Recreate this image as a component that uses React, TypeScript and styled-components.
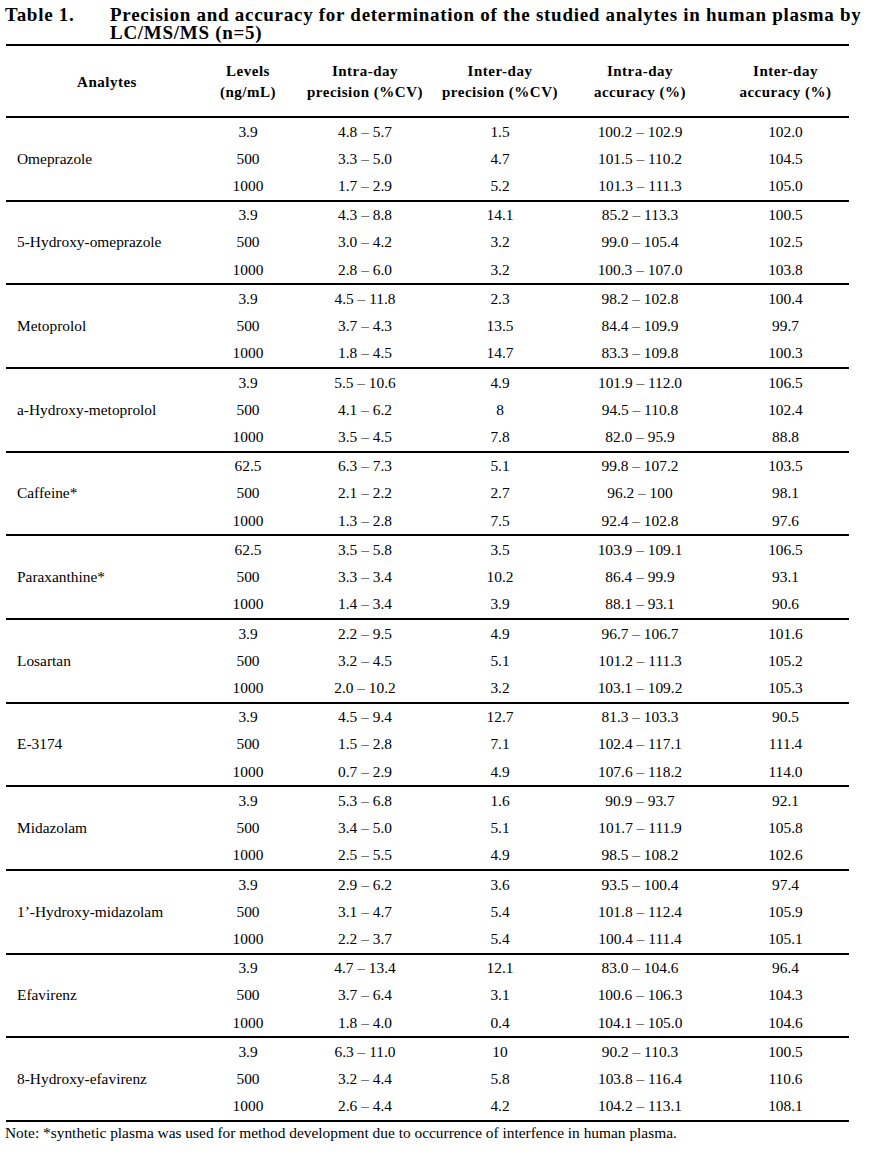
import React from 'react';
import styled, { createGlobalStyle } from 'styled-components';

const GlobalStyle = createGlobalStyle`
  body {
    margin: 0;
    background: #fff;
    color: #000;
    font-family: "Liberation Serif", "Times New Roman", serif;
  }
`

const Page = styled.div`
  width: 870px;
  padding: 6px 8px 0 5px;
  box-sizing: border-box;
`

const Caption = styled.div`
  display: flex;
  font-weight: bold;
  font-size: 19px;
  line-height: 18px;
  letter-spacing: 0.72px;
`

const CaptionLabel = styled.div`
  width: 105px;
  flex-shrink: 0;
`

const CaptionText = styled.div`
  flex: 1;
`

const Table = styled.div`
  width: 843px;
  margin-top: 2px;
  margin-left: 1px;
  border-top: 2px solid #000;
`

const COLUMNS = '202px 80px 154px 116px 164px 127px';

const HeadRow = styled.div`
  display: grid;
  grid-template-columns: ${COLUMNS};
  height: 70px;
  border-bottom: 2px solid #000;
`

const HeadCell = styled.div`
  display: flex;
  align-items: center;
  justify-content: center;
  text-align: center;
  font-weight: bold;
  font-size: 15px;
  line-height: 21px;
  letter-spacing: 0.5px;
  padding-top: 2px;
`

const Group = styled.div`
  display: grid;
  grid-template-columns: ${COLUMNS};
  grid-template-rows: repeat(3, 27.23px);
  border-bottom: 2px solid #000;
  font-size: 15.4px;
`

const Analyte = styled.div`
  grid-column: 1;
  grid-row: 1 / span 3;
  display: flex;
  align-items: center;
  padding-left: 11px;
`

const Value = styled.div`
  display: flex;
  align-items: center;
  justify-content: center;
  white-space: nowrap;
`

const Note = styled.div`
  font-size: 15.4px;
  line-height: 20px;
  padding-top: 1px;
`

type Row = [string, string, string, string, string];

interface Analyte {
  name: string;
  rows: Row[];
}

const analytes: Analyte[] = [
  { name: 'Omeprazole', rows: [
    ['3.9', '4.8 – 5.7', '1.5', '100.2 – 102.9', '102.0'],
    ['500', '3.3 – 5.0', '4.7', '101.5 – 110.2', '104.5'],
    ['1000', '1.7 – 2.9', '5.2', '101.3 – 111.3', '105.0'],
  ] },
  { name: '5-Hydroxy-omeprazole', rows: [
    ['3.9', '4.3 – 8.8', '14.1', '85.2 – 113.3', '100.5'],
    ['500', '3.0 – 4.2', '3.2', '99.0 – 105.4', '102.5'],
    ['1000', '2.8 – 6.0', '3.2', '100.3 – 107.0', '103.8'],
  ] },
  { name: 'Metoprolol', rows: [
    ['3.9', '4.5 – 11.8', '2.3', '98.2 – 102.8', '100.4'],
    ['500', '3.7 – 4.3', '13.5', '84.4 – 109.9', '99.7'],
    ['1000', '1.8 – 4.5', '14.7', '83.3 – 109.8', '100.3'],
  ] },
  { name: 'a-Hydroxy-metoprolol', rows: [
    ['3.9', '5.5 – 10.6', '4.9', '101.9 – 112.0', '106.5'],
    ['500', '4.1 – 6.2', '8', '94.5 – 110.8', '102.4'],
    ['1000', '3.5 – 4.5', '7.8', '82.0 – 95.9', '88.8'],
  ] },
  { name: 'Caffeine*', rows: [
    ['62.5', '6.3 – 7.3', '5.1', '99.8 – 107.2', '103.5'],
    ['500', '2.1 – 2.2', '2.7', '96.2 – 100', '98.1'],
    ['1000', '1.3 – 2.8', '7.5', '92.4 – 102.8', '97.6'],
  ] },
  { name: 'Paraxanthine*', rows: [
    ['62.5', '3.5 – 5.8', '3.5', '103.9 – 109.1', '106.5'],
    ['500', '3.3 – 3.4', '10.2', '86.4 – 99.9', '93.1'],
    ['1000', '1.4 – 3.4', '3.9', '88.1 – 93.1', '90.6'],
  ] },
  { name: 'Losartan', rows: [
    ['3.9', '2.2 – 9.5', '4.9', '96.7 – 106.7', '101.6'],
    ['500', '3.2 – 4.5', '5.1', '101.2 – 111.3', '105.2'],
    ['1000', '2.0 – 10.2', '3.2', '103.1 – 109.2', '105.3'],
  ] },
  { name: 'E-3174', rows: [
    ['3.9', '4.5 – 9.4', '12.7', '81.3 – 103.3', '90.5'],
    ['500', '1.5 – 2.8', '7.1', '102.4 – 117.1', '111.4'],
    ['1000', '0.7 – 2.9', '4.9', '107.6 – 118.2', '114.0'],
  ] },
  { name: 'Midazolam', rows: [
    ['3.9', '5.3 – 6.8', '1.6', '90.9 – 93.7', '92.1'],
    ['500', '3.4 – 5.0', '5.1', '101.7 – 111.9', '105.8'],
    ['1000', '2.5 – 5.5', '4.9', '98.5 – 108.2', '102.6'],
  ] },
  { name: '1’-Hydroxy-midazolam', rows: [
    ['3.9', '2.9 – 6.2', '3.6', '93.5 – 100.4', '97.4'],
    ['500', '3.1 – 4.7', '5.4', '101.8 – 112.4', '105.9'],
    ['1000', '2.2 – 3.7', '5.4', '100.4 – 111.4', '105.1'],
  ] },
  { name: 'Efavirenz', rows: [
    ['3.9', '4.7 – 13.4', '12.1', '83.0 – 104.6', '96.4'],
    ['500', '3.7 – 6.4', '3.1', '100.6 – 106.3', '104.3'],
    ['1000', '1.8 – 4.0', '0.4', '104.1 – 105.0', '104.6'],
  ] },
  { name: '8-Hydroxy-efavirenz', rows: [
    ['3.9', '6.3 – 11.0', '10', '90.2 – 110.3', '100.5'],
    ['500', '3.2 – 4.4', '5.8', '103.8 – 116.4', '110.6'],
    ['1000', '2.6 – 4.4', '4.2', '104.2 – 113.1', '108.1'],
  ] },
];

const headers: [string, string][] = [
  ['Levels', '(ng/mL)'],
  ['Intra-day', 'precision (%CV)'],
  ['Inter-day', 'precision (%CV)'],
  ['Intra-day', 'accuracy (%)'],
  ['Inter-day', 'accuracy (%)'],
];

export default function App() {
  return (
    <Page>
      <GlobalStyle />
      <Caption>
        <CaptionLabel>Table 1.</CaptionLabel>
        <CaptionText>
          Precision and accuracy for determination of the studied analytes in human plasma by LC/MS/MS (n=5)
        </CaptionText>
      </Caption>
      <Table>
        <HeadRow>
          <HeadCell>Analytes</HeadCell>
          {headers.map(([a, b], i) => (
            <HeadCell key={i}>{a}<br />{b}</HeadCell>
          ))}
        </HeadRow>
        {analytes.map(analyte => (
          <Group key={analyte.name}>
            <Analyte>{analyte.name}</Analyte>
            {analyte.rows.map((row, r) =>
              row.map((v, c) => (
                <Value key={`${r}-${c}`} style={{ gridRow: r + 1, gridColumn: c + 2 }}>{v}</Value>
              ))
            )}
          </Group>
        ))}
      </Table>
      <Note>Note: *synthetic plasma was used for method development due to occurrence of interfence in human plasma.</Note>
    </Page>
  );
}
